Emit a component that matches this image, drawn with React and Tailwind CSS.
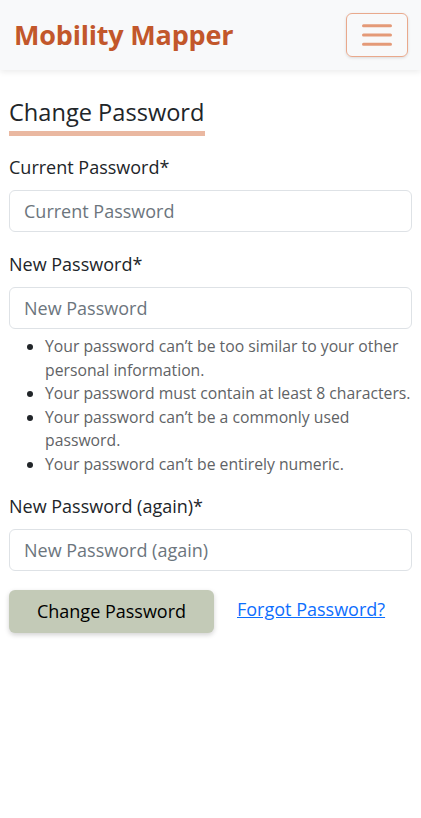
import React from 'react';

const rules = [
  'Your password can’t be too similar to your other personal information.',
  'Your password must contain at least 8 characters.',
  'Your password can’t be a commonly used password.',
  'Your password can’t be entirely numeric.',
];

function Field({ label, placeholder, children }) {
  return (
    <div>
      <label className="block text-[18px] text-[#212529] mb-[9px] leading-[27px]">{label}*</label>
      <input
        type="password"
        placeholder={placeholder}
        className="block w-full h-[42px] rounded-[6px] border border-[#dee2e6] bg-white px-[14px] text-[18px] placeholder:text-[#6c757d] outline-none"
      />
      {children}
    </div>
  );
}

export default function App() {
  return (
    <div className="min-h-[818px] bg-white" style={{ fontFamily: '"Open Sans", sans-serif' }}>
      <nav className="h-[70px] bg-[#f8f9fa] shadow-[0_2px_6px_rgba(0,0,0,0.08)] flex items-center justify-between pl-[14px] pr-[13px]">
        <span className="text-[27px] font-bold text-[#c2572b] tracking-[-0.2px]">Mobility Mapper</span>
        <button className="w-[62px] h-[44px] rounded-[6px] border border-[#e9a98c] shadow-[0_1px_3px_rgba(0,0,0,0.12)] flex items-center justify-center">
          <svg width="30" height="24" viewBox="0 0 30 24">
            <path d="M1.5 2.7h27M1.5 12h27M1.5 21.3h27" stroke="#e49a78" strokeWidth="3" strokeLinecap="round" />
          </svg>
        </button>
      </nav>

      <main className="px-[9px] pt-[27px]">
        <h2 className="inline-block text-[23.6px] text-[#212529] leading-[30px] pb-[4px] border-b-[5px] border-[#eab8a1] pr-[1px] mb-[18px]">
          Change Password
        </h2>

        <div className="flex flex-col gap-[19px]">
          <Field label="Current Password" placeholder="Current Password" />

          <Field label="New Password" placeholder="New Password">
            <ul className="list-disc pl-[36px] mt-[6px] -mb-[3px] text-[15.75px] leading-[23.6px] text-[#5f6366] marker:text-[#212529]">
              {rules.map((r, i) => (
                <li key={i}>{r}</li>
              ))}
            </ul>
          </Field>

          <Field label="New Password (again)" placeholder="New Password (again)" />
        </div>

        <div className="flex items-center gap-[23px] mt-[19px]">
          <button className="w-[205px] h-[43px] rounded-[6px] bg-[#c3cab7] text-[18px] text-black shadow-[0_2px_5px_rgba(0,0,0,0.18)]">
            Change Password
          </button>
          <a href="#" className="text-[18px] text-[#0d6efd] underline -mt-[4px]">Forgot Password?</a>
        </div>
      </main>
    </div>
  );
}
